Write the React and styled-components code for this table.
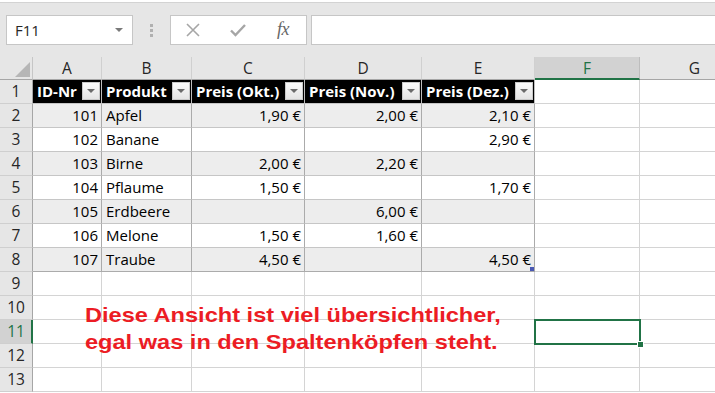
import React from 'react';
import styled, { createGlobalStyle } from 'styled-components';

const GREEN = '#217346';
const GRID = '#d4d4d4';
const TABLE_V = '#ababab';
const TABLE_H = '#c6c6c6';
const HEAD_LINE = '#a6a6a6';

const GlobalStyle = createGlobalStyle`
  html, body { margin: 0; padding: 0; background: #fff; }
  body { overflow: hidden; font-family: 'Open Sans', 'Noto Sans', sans-serif; }
`;

const Shell = styled.div`
  position: relative;
  width: 715px;
  height: 393px;
  overflow: hidden;
  background: #fff;
`;

/* ---------- formula bar ---------- */

const FormulaBar = styled.div`
  box-sizing: border-box;
  height: 57px;
  padding: 15px 0 0 6px;
  display: flex;
  align-items: flex-start;
  background: linear-gradient(#fff 0 2px, #d3d3d3 2px 3px, #e6e6e6 3px);
`;

const NameBox = styled.div`
  box-sizing: border-box;
  width: 127px;
  height: 30px;
  padding: 0 9px 0 8px;
  display: flex;
  align-items: center;
  justify-content: space-between;
  background: #fff;
  border: 1px solid #c6c6c6;
  font: 15px 'Open Sans', sans-serif;
  color: #262626;
`;

const DropCaret = styled.span`
  width: 0;
  height: 0;
  border-left: 4px solid transparent;
  border-right: 4px solid transparent;
  border-top: 4px solid ${(p) => p.$color || '#7a7a7a'};
`;

const Grip = styled.div`
  margin: 9px 0 0 17px;
  display: flex;
  flex-direction: column;
  gap: 2px;
  & > span {
    width: 3px;
    height: 3px;
    background: #b0b0b0;
  }
`;

const FxGroup = styled.div`
  box-sizing: border-box;
  width: 137px;
  height: 30px;
  margin-left: 17px;
  position: relative;
  background: #fff;
  border: 1px solid #c6c6c6;
`;

const FxSlot = styled.div`
  position: absolute;
  top: 0;
  bottom: 0;
  left: ${(p) => p.$x}px;
  width: 24px;
  margin-left: -12px;
  display: flex;
  align-items: center;
  justify-content: center;
`;

const FxLabel = styled.span`
  font: italic 18px 'Liberation Serif', serif;
  color: #666;
  letter-spacing: -0.5px;
  margin-top: -2px;
`;

const FormulaInput = styled.div`
  box-sizing: border-box;
  flex: 1;
  height: 30px;
  margin-left: 4px;
  background: #fff;
  border: 1px solid #c6c6c6;
  border-right: none;
`;

/* ---------- sheet grid ---------- */

const Sheet = styled.div`
  display: grid;
  grid-template-columns: 33px 69px 90px 113px 117px 113px 105px 110px;
  grid-template-rows: 23px repeat(13, 24px);
  width: 750px;
`;

const Corner = styled.div`
  box-sizing: border-box;
  position: relative;
  background: #e6e6e6;
  border-right: 1px solid #c6c6c6;
  border-bottom: 1px solid ${HEAD_LINE};
  &::after {
    content: '';
    position: absolute;
    right: 2px;
    bottom: 2px;
    width: 0;
    height: 0;
    border-left: 15px solid transparent;
    border-bottom: 15px solid #b6b6b6;
  }
`;

const ColHead = styled.div`
  box-sizing: border-box;
  background: ${(p) => (p.$active ? '#d2d2d2' : '#e6e6e6')};
  border-right: 1px solid ${(p) => (p.$active ? '#bdbdbd' : '#d0d0d0')};
  border-bottom: ${(p) => (p.$active ? `2px solid ${GREEN}` : `1px solid ${HEAD_LINE}`)};
  color: ${(p) => (p.$active ? GREEN : '#262626')};
  font: 15.5px/23px 'Open Sans', sans-serif;
  text-align: center;
`;

const RowHead = styled.div`
  box-sizing: border-box;
  background: ${(p) => (p.$active ? '#d2d2d2' : '#e6e6e6')};
  border-right: ${(p) => (p.$active ? `2px solid ${GREEN}` : `1px solid ${HEAD_LINE}`)};
  border-bottom: 1px solid #cfcfcf;
  color: ${(p) => (p.$active ? GREEN : '#262626')};
  font: 15.5px/23px 'Open Sans', sans-serif;
  text-align: center;
  padding-left: ${(p) => (p.$active ? '1px' : '0')};
`;

const Cell = styled.div`
  box-sizing: border-box;
  position: relative;
  padding: 0 3px 0 4px;
  background: ${(p) => (p.$band ? '#ededed' : '#fff')};
  border-right: 1px solid ${(p) => (p.$table ? TABLE_V : GRID)};
  border-bottom: 1px solid ${(p) => (p.$last ? TABLE_V : p.$table ? TABLE_H : GRID)};
  font: 15px/23px 'Open Sans', sans-serif;
  color: #000;
  text-align: ${(p) => (p.$num ? 'right' : 'left')};
  white-space: nowrap;
  z-index: ${(p) => (p.$selected ? 2 : 'auto')};

  &::after {
    content: ${(p) => (p.$selected ? "''" : 'none')};
    position: absolute;
    left: -1px;
    top: -1px;
    right: -2px;
    bottom: -2px;
    border: 2px solid ${GREEN};
  }
  &::before {
    content: ${(p) => (p.$selected || p.$resize ? "''" : 'none')};
    position: absolute;
    z-index: 1;
    right: ${(p) => (p.$selected ? '-4px' : '0')};
    bottom: ${(p) => (p.$selected ? '-4px' : '0')};
    width: ${(p) => (p.$selected ? '5px' : '4px')};
    height: ${(p) => (p.$selected ? '5px' : '4px')};
    background: ${(p) => (p.$selected ? GREEN : '#4a58b3')};
    outline: ${(p) => (p.$selected ? '1px solid #fff' : 'none')};
  }
`;

const TableHead = styled.div`
  box-sizing: border-box;
  display: flex;
  align-items: flex-start;
  justify-content: space-between;
  padding: 0 1px 0 4px;
  background: #000;
  border-right: 1px solid #bdbdbd;
  border-bottom: 1px solid ${TABLE_H};
  color: #fff;
  font: bold 15px/23px 'Open Sans', sans-serif;
  white-space: nowrap;
`;

const FilterButton = styled.span`
  box-sizing: border-box;
  flex: none;
  width: 18px;
  height: 18px;
  margin-top: 2px;
  display: flex;
  align-items: center;
  justify-content: center;
  background: linear-gradient(#fafafa, #e4e4e4);
  border: 1px solid #c9c9c9;
`;

const Note = styled.div`
  position: absolute;
  left: 85px;
  top: 301px;
  font: bold 20.5px/27px 'Liberation Sans', Arial, sans-serif;
  color: #ec1c24;
  white-space: nowrap;
  transform: scaleX(1.15);
  transform-origin: left top;
`;

const columns = ['A', 'B', 'C', 'D', 'E', 'F', 'G'];
const headers = ['ID-Nr', 'Produkt', 'Preis (Okt.)', 'Preis (Nov.)', 'Preis (Dez.)'];
const rows = [
  ['101', 'Apfel', '1,90 €', '2,00 €', '2,10 €'],
  ['102', 'Banane', '', '', '2,90 €'],
  ['103', 'Birne', '2,00 €', '2,20 €', ''],
  ['104', 'Pflaume', '1,50 €', '', '1,70 €'],
  ['105', 'Erdbeere', '', '6,00 €', ''],
  ['106', 'Melone', '1,50 €', '1,60 €', ''],
  ['107', 'Traube', '4,50 €', '', '4,50 €'],
];
const TOTAL_ROWS = 13;
const ACTIVE_ROW = 11;
const ACTIVE_COL = 5;

const CrossIcon = () => (
  <svg width="14" height="14" viewBox="0 0 14 14">
    <path d="M1 1 L13 13 M13 1 L1 13" stroke="#a6a6a6" strokeWidth="1.6" fill="none" />
  </svg>
);

const CheckIcon = () => (
  <svg width="16" height="14" viewBox="0 0 16 14">
    <path d="M1 7.5 L5.5 12 L15 2" stroke="#a6a6a6" strokeWidth="2.4" fill="none" />
  </svg>
);

function renderRow(r) {
  const cells = [];
  const active = r === ACTIVE_ROW;
  cells.push(
    <RowHead key="h" $active={active}>
      {r}
    </RowHead>
  );
  if (r === 1) {
    headers.forEach((h) => (
      cells.push(
        <TableHead key={h}>
          <span>{h}</span>
          <FilterButton>
            <DropCaret $color="#6b6b6b" />
          </FilterButton>
        </TableHead>
      )
    ));
  } else if (r <= rows.length + 1) {
    const data = rows[r - 2];
    const band = r % 2 === 0;
    const last = r === rows.length + 1;
    data.forEach((v, i) => {
      cells.push(
        <Cell
          key={i}
          $table
          $band={band}
          $last={last}
          $num={i !== 1}
          $resize={last && i === data.length - 1}
        >
          {v}
        </Cell>
      );
    });
  } else {
    for (let i = 0; i < 5; i += 1) cells.push(<Cell key={i} />);
  }
  cells.push(<Cell key="f" $selected={active} />);
  cells.push(<Cell key="g" />);
  return cells;
}

export default function App() {
  const rowNums = Array.from({ length: TOTAL_ROWS }, (_, i) => i + 1);
  return (
    <>
      <GlobalStyle />
      <Shell>
        <FormulaBar>
          <NameBox>
            <span>F11</span>
            <DropCaret />
          </NameBox>
          <Grip>
            <span />
            <span />
            <span />
          </Grip>
          <FxGroup>
            <FxSlot $x={22}>
              <CrossIcon />
            </FxSlot>
            <FxSlot $x={67}>
              <CheckIcon />
            </FxSlot>
            <FxSlot $x={112}>
              <FxLabel>fx</FxLabel>
            </FxSlot>
          </FxGroup>
          <FormulaInput />
        </FormulaBar>

        <Sheet>
          <Corner />
          {columns.map((c, i) => (
            <ColHead key={c} $active={i === ACTIVE_COL}>
              {c}
            </ColHead>
          ))}
          {rowNums.map((r) => (
            <React.Fragment key={r}>{renderRow(r)}</React.Fragment>
          ))}
        </Sheet>

        <Note>
          Diese Ansicht ist viel übersichtlicher,
          <br />
          egal was in den Spaltenköpfen steht.
        </Note>
      </Shell>
    </>
  );
}
